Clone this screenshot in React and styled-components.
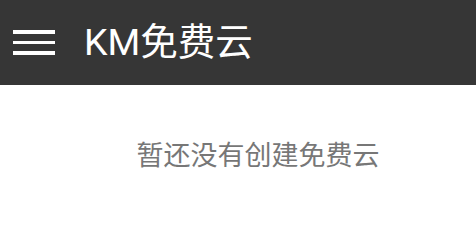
import React from 'react'
import styled, { createGlobalStyle } from 'styled-components'

const GlobalStyle = createGlobalStyle`
  html, body {
    margin: 0;
    padding: 0;
    background: #ffffff;
    font-family: Roboto, 'Noto Sans CJK SC', sans-serif;
  }
`

const Toolbar = styled.header`
  align-items: center;
  background-color: #363636;
  display: flex;
  height: 85px;
  padding-left: 13px;
`

const MenuButton = styled.div`
  display: flex;
  flex-direction: column;
  gap: 7px;
  width: 42px;
`

const MenuLine = styled.span`
  background-color: #ffffff;
  display: block;
  height: 3.5px;
`

const Title = styled.h1`
  color: #ffffff;
  font-size: 37.5px;
  font-weight: 400;
  margin: 0 0 0 29px;
  line-height: 1;
`

const EmptyState = styled.div`
  color: #777777;
  display: flex;
  font-size: 27px;
  justify-content: center;
  padding: 56px 0 0 40px;
  line-height: 30px;
`

const App = () => {
  return (
    <>
      <GlobalStyle />
      <Toolbar>
        <MenuButton>
          <MenuLine />
          <MenuLine />
          <MenuLine />
        </MenuButton>
        <Title>KM免费云</Title>
      </Toolbar>
      <EmptyState>暂还没有创建免费云</EmptyState>
    </>
  )
}

export default App
